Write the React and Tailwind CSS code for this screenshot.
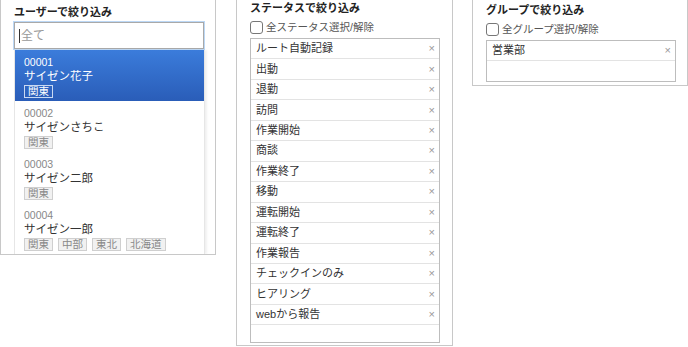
import React from 'react';

const users = [
  { id: '00001', name: 'サイゼン花子', tags: ['関東'], active: true },
  { id: '00002', name: 'サイゼンさちこ', tags: ['関東'] },
  { id: '00003', name: 'サイゼン二郎', tags: ['関東'] },
  { id: '00004', name: 'サイゼン一郎', tags: ['関東', '中部', '東北', '北海道'] },
];

const statuses = [
  'ルート自動記録', '出動', '退勤', '訪問', '作業開始', '商談', '作業終了',
  '移動', '運転開始', '運転終了', '作業報告', 'チェックインのみ', 'ヒアリング', 'webから報告',
];

function Checkbox({ label }) {
  return (
    <div className="flex items-center h-[12px]">
      <span className="w-[13px] h-[13px] border border-[#777] rounded-[3px] bg-white shrink-0" />
      <span className="ml-[3px] text-[10.5px] leading-[12px] text-[#555]">{label}</span>
    </div>
  );
}

function ChipRow({ text }) {
  return (
    <div className="h-[20.46px] flex items-center justify-between pl-[5px] pr-[4px] border-b border-[#e3e3e3] bg-white">
      <span className="text-[11px] text-[#333] leading-none">{text}</span>
      <span className="text-[11px] text-[#999] leading-none">×</span>
    </div>
  );
}

export default function App() {
  return (
    <div className="w-[688px] h-[347px] bg-white flex items-start font-['Liberation_Sans','Noto_Sans_CJK_JP',sans-serif]">
      {/* users */}
      <div className="w-[216px] h-[255px] border border-t-0 border-[#c8c8c8] overflow-hidden pl-[13px]">
        <div className="pt-[5px] text-[11px] leading-[14px] font-bold text-[#222]">ユーザーで絞り込み</div>
        <div className="mt-[3px] w-[190px] h-[27px] border border-[#a9a9a9] shadow-[0_0_0_1px_#bcd8f6] flex items-center pl-[4px]">
          <span className="w-px h-[14px] bg-[#333]" />
          <span className="ml-[1px] text-[12px] text-[#999]">全て</span>
        </div>
        <div className="mt-[1px] w-[191px] border-x border-[#e6e6e6] shadow-[2px_0_2px_rgba(0,0,0,0.06)]">
          {users.map((u) => (
            <div
              key={u.id}
              className={`h-[51px] pl-[9px] pt-[5px] ${u.active ? 'bg-linear-to-b from-[#3b7cdb] to-[#2a5db8] text-white' : 'bg-white'}`}
            >
              <div className={`text-[10.5px] leading-[14px] ${u.active ? 'text-white' : 'text-[#888]'}`}>{u.id}</div>
              <div className={`text-[11.5px] leading-[15px] ${u.active ? 'text-white' : 'text-[#333]'}`}>{u.name}</div>
              <div className="flex gap-[5px] mt-[1px]">
                {u.tags.map((t) => (
                  <span
                    key={t}
                    className={`text-[10.5px] leading-[11px] px-[3px] border ${u.active ? 'border-[#c9d9f2] text-white' : 'border-[#cfcfcf] bg-[#f1f1f1] text-[#888]'}`}
                  >
                    {t}
                  </span>
                ))}
              </div>
            </div>
          ))}
        </div>
      </div>

      {/* statuses */}
      <div className="ml-[20px] w-[217px] h-[346px] border border-t-0 border-[#c8c8c8] pl-[13px]">
        <div className="pt-[1px] text-[11px] leading-[14px] font-bold text-[#222]">ステータスで絞り込み</div>
        <div className="mt-[6px]">
          <Checkbox label="全ステータス選択/解除" />
        </div>
        <div className="mt-[5px] w-[190px] h-[305px] border border-[#bdbdbd] bg-white">
          {statuses.map((s) => (
            <ChipRow key={s} text={s} />
          ))}
        </div>
      </div>

      {/* groups */}
      <div className="ml-[19px] w-[216px] h-[86px] border border-t-0 border-[#c8c8c8] pl-[13px]">
        <div className="pt-[3px] text-[11px] leading-[14px] font-bold text-[#222]">グループで絞り込み</div>
        <div className="mt-[6px]">
          <Checkbox label="全グループ選択/解除" />
        </div>
        <div className="mt-[5px] w-[190px] h-[42px] border border-[#bdbdbd] bg-white">
          <ChipRow text="営業部" />
        </div>
      </div>
    </div>
  );
}
